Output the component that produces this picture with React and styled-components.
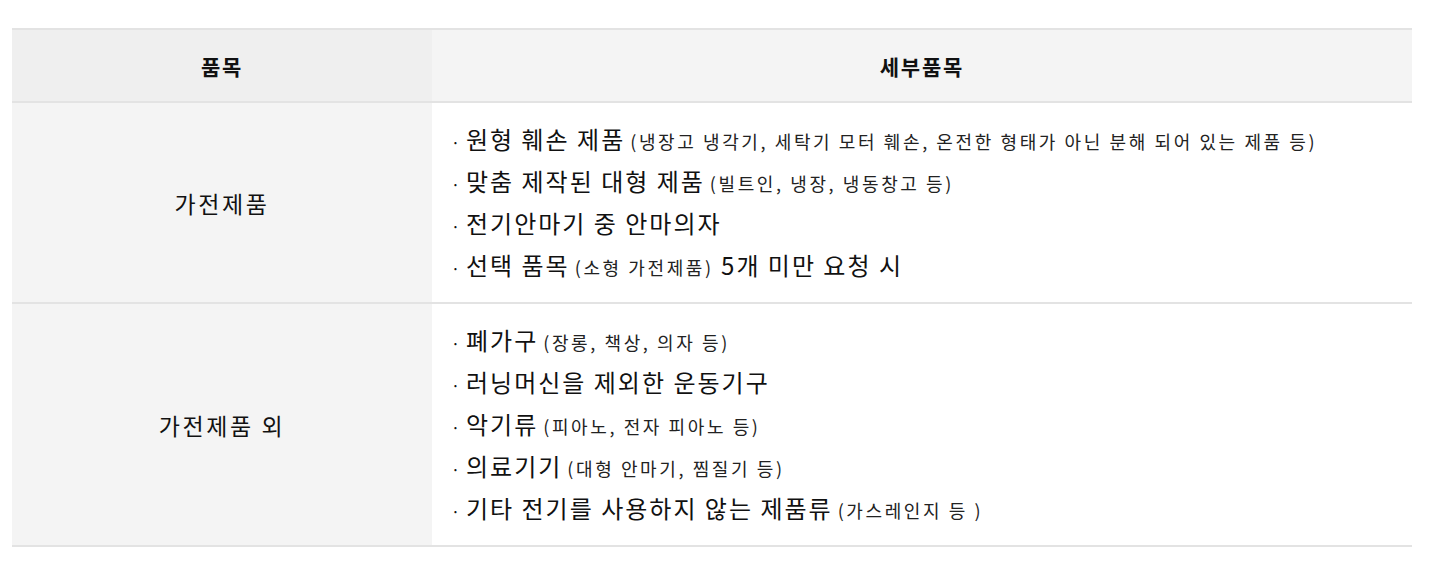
import React from "react";
import styled, { createGlobalStyle } from "styled-components";

const GlobalStyle = createGlobalStyle`
  body {
    margin: 0;
    background: #fff;
    font-family: "Noto Sans CJK KR", "Noto Sans", sans-serif;
    color: #111;
  }
`;

const rows = [
  {
    name: "가전제품",
    items: [
      { main: "원형 훼손 제품", note: "(냉장고 냉각기, 세탁기 모터 훼손, 온전한 형태가 아닌 분해 되어 있는 제품 등)" },
      { main: "맞춤 제작된 대형 제품", note: "(빌트인, 냉장, 냉동창고 등)" },
      { main: "전기안마기 중 안마의자" },
      { main: "선택 품목", note: "(소형 가전제품)", tail: "5개 미만 요청 시" },
    ],
  },
  {
    name: "가전제품 외",
    items: [
      { main: "폐가구", note: "(장롱, 책상, 의자 등)" },
      { main: "러닝머신을 제외한 운동기구" },
      { main: "악기류", note: "(피아노, 전자 피아노 등)" },
      { main: "의료기기", note: "(대형 안마기, 찜질기 등)" },
      { main: "기타 전기를 사용하지 않는 제품류", note: "(가스레인지 등 )" },
    ],
  },
];

const App = () => {
  return (
    <Wrap>
      <GlobalStyle />
      <Table>
        <colgroup>
          <col style={{ width: 420 }} />
          <col />
        </colgroup>
        <thead>
          <tr>
            <HeadCell $dark>품목</HeadCell>
            <HeadCell>세부품목</HeadCell>
          </tr>
        </thead>
        <tbody>
          {rows.map((row) => (
            <tr key={row.name}>
              <NameCell>{row.name}</NameCell>
              <DetailCell>
                <List>
                  {row.items.map((item) => (
                    <Item key={item.main}>
                      <Dot>·</Dot>
                      {item.main}
                      {item.note && <Note>{item.note}</Note>}
                      {item.tail && <> {item.tail}</>}
                    </Item>
                  ))}
                </List>
              </DetailCell>
            </tr>
          ))}
        </tbody>
      </Table>
    </Wrap>
  );
};

const Wrap = styled.div`
  padding: 28px 23px 20px 12px;
`;

const Table = styled.table`
  width: 1400px;
  border-collapse: collapse;
  border-top: 2px solid #e3e3e3;
  table-layout: fixed;
`;

const HeadCell = styled.th`
  height: 71px;
  padding: 0;
  background: ${(props) => (props.$dark ? "#efefef" : "#f4f4f4")};
  border-bottom: 2px solid #e3e3e3;
  font-size: 21px;
  font-weight: 700;
  letter-spacing: 1.8px;
  color: #111;
  text-align: center;
  vertical-align: middle;
`;

const NameCell = styled.td`
  background: #f4f4f4;
  border-bottom: 2px solid #e3e3e3;
  font-size: 23px;
  letter-spacing: 2.6px;
  text-align: center;
  vertical-align: middle;
  padding: 0;
`;

const DetailCell = styled.td`
  background: #fff;
  border-bottom: 2px solid #e3e3e3;
  padding: 15px 20px 16px 19px;
  vertical-align: middle;
`;

const List = styled.ul`
  list-style: none;
  margin: 0;
  padding: 0;
`;

const Item = styled.li`
  font-size: 24px;
  letter-spacing: 2px;
  line-height: 42px;
  height: 42px;
  white-space: nowrap;
  color: #111;
`;

const Dot = styled.span`
  display: inline-block;
  width: 15px;
  font-size: 16px;
  letter-spacing: 0;
`;

const Note = styled.span`
  font-size: 18px;
  letter-spacing: 2.6px;
  margin-left: 5px;
  color: #222;
`;

export default App;
